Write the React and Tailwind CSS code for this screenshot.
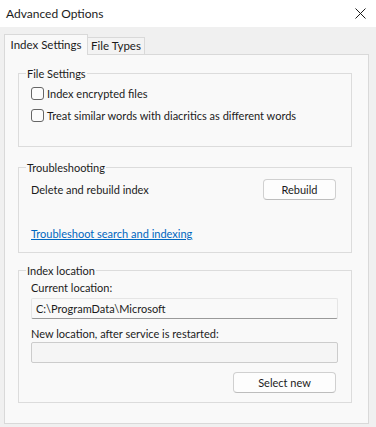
export default function App() {
  return (
    <div className="w-[376px] h-[427px] bg-[#f0f0f0] overflow-hidden text-[11px] leading-[16px] text-[#1b1b1b] flex flex-col font-['Lato',sans-serif]">
      <div className="h-[27px] shrink-0 bg-white flex items-center justify-between pl-[6px] pr-[10px] text-[12px]">
        <span>Advanced Options</span>
        <svg width="11" height="11" viewBox="0 0 11 11" className="text-[#1b1b1b]">
          <path d="M0.5 0.5 L10.5 10.5 M10.5 0.5 L0.5 10.5" stroke="currentColor" strokeWidth="1" fill="none" />
        </svg>
      </div>
      <div className="mt-[7px] pl-[4px] flex items-end shrink-0 text-[11.5px]">
        <div className="relative z-10 -mb-px w-[84px] h-[21px] border border-b-0 border-[#d9d9d9] bg-[#f9f9f9] flex items-center justify-center pb-[1px]">
          Index Settings
        </div>
        <div className="w-[57px] h-[17px] border-t border-r border-[#d9d9d9] bg-[#f3f3f3] flex items-center justify-center">
          File Types
        </div>
      </div>
      <div className="ml-[4px] w-[365px] h-[370px] shrink-0 border border-[#d9d9d9] bg-[#f9f9f9] pl-[13px] pr-[16px] pt-[18px] flex flex-col">
        <div className="relative h-[74px] border border-[#dcdcdc] pt-[13px] pl-[12px] flex flex-col gap-[9px]">
          <span className="absolute left-[7px] -top-[8px] px-[1px] bg-[#f9f9f9]">File Settings</span>
          <label className="h-[13px] flex items-center gap-[3px]">
            <span className="w-[13px] h-[13px] border border-[#666666] rounded-[3px] bg-[#fcfcfc]" />
            <span>Index encrypted files</span>
          </label>
          <label className="h-[13px] flex items-center gap-[3px]">
            <span className="w-[13px] h-[13px] border border-[#666666] rounded-[3px] bg-[#fcfcfc]" />
            <span>Treat similar words with diacritics as different words</span>
          </label>
        </div>
        <div className="relative mt-[20px] h-[86px] border border-[#dcdcdc] pt-[11px] pl-[12px] pr-[15px] flex flex-col">
          <span className="absolute left-[7px] -top-[8px] px-[1px] bg-[#f9f9f9]">Troubleshooting</span>
          <div className="h-[21px] flex items-center justify-between">
            <span>Delete and rebuild index</span>
            <button className="w-[73px] h-[21px] bg-[#fdfdfd] border border-[#d0d0d0] border-b-[#bdbdbd] rounded-[4px] flex items-center justify-center">
              Rebuild
            </button>
          </div>
          <a className="mt-[26px] self-start text-[#0067c0] underline">Troubleshoot search and indexing</a>
        </div>
        <div className="relative mt-[17px] h-[133px] border border-[#dcdcdc] pt-[9px] pl-[12px] pr-[13px] flex flex-col">
          <span className="absolute left-[7px] -top-[8px] px-[1px] bg-[#f9f9f9]">Index location</span>
          <span>Current location:</span>
          <div className="mt-[2px] h-[21px] border border-[#e5e5e5] border-b-[#9a9a9a] bg-[#f9f9f9] rounded-[2px] pl-[4px] flex items-center">
            C:\ProgramData\Microsoft
          </div>
          <span className="mt-[7px]">New location, after service is restarted:</span>
          <div className="h-[21px] border border-[#cccccc] bg-[#f5f5f5] rounded-[2px]" />
          <button className="mt-[9px] mr-[2px] self-end w-[103px] h-[21px] bg-[#fdfdfd] border border-[#d0d0d0] border-b-[#bdbdbd] rounded-[4px] flex items-center justify-center">
            Select new
          </button>
        </div>
      </div>
    </div>
  );
}
